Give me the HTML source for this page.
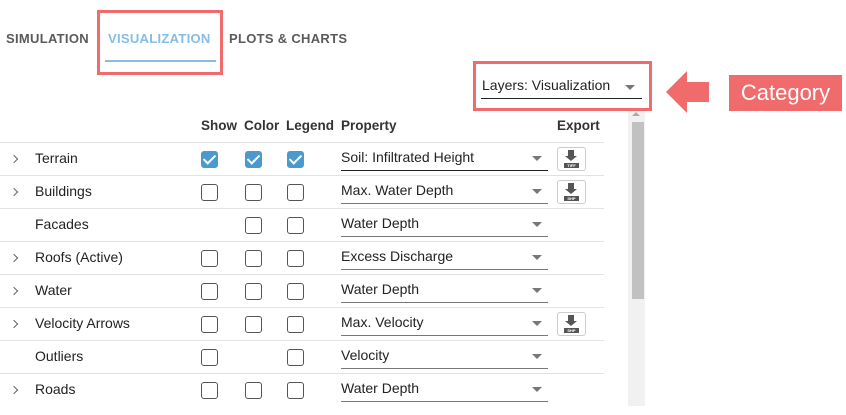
<!DOCTYPE html>
<html><head><style>
body{margin:0;width:846px;height:415px;background:#fff;font-family:"Liberation Sans",sans-serif;position:relative;overflow:hidden;color:#222}
.a{position:absolute}
.tab{position:absolute;top:31px;font-size:13px;font-weight:bold;letter-spacing:0.3px;color:#5a5a5a}
.row{position:absolute;left:0;width:604px;height:33px;border-top:1px solid #e2e2e2}
.cb{position:absolute;width:15px;height:15px;border:1.5px solid #555;border-radius:3px;top:8px}
.cb.on{background:#4a9ad0;border-color:#4a9ad0}
.cb.on:after{content:"";position:absolute;left:4px;top:0px;width:5px;height:10px;border:solid #fff;border-width:0 2.5px 2.5px 0;transform:rotate(45deg)}
.nm{position:absolute;left:35px;top:7px;font-size:14px}
.ch{position:absolute;left:11px;top:13px;width:5px;height:5px;border:solid #666;border-width:1.5px 1.5px 0 0;transform:rotate(45deg)}
.sel{position:absolute;left:341px;width:207px;top:6px;height:21px;border-bottom:1px solid #777;font-size:14px}
.sel:after{content:"";position:absolute;right:6px;top:7px;border:5px solid transparent;border-top:5px solid #777}
.ex{position:absolute;left:557px;top:4px;width:27px;height:22px;border:1px solid #ccc;border-radius:3px;background:#fff}
.ex i{position:absolute;left:10px;top:2px;width:6px;height:6px;background:#555}
.ex b{position:absolute;left:7px;top:8px;border:6px solid transparent;border-top:5px solid #555;border-bottom:0}
.ex s{position:absolute;left:6px;top:15px;width:15px;height:5px;background:#555;font-size:4px;color:#fff;text-decoration:none;line-height:5px;text-align:center;font-weight:bold}
.h{position:absolute;top:118px;font-size:13.5px;font-weight:bold;color:#333}
</style></head><body>
<div class="tab" style="left:6px">SIMULATION</div>
<div class="tab" style="left:108px;color:#85bde6">VISUALIZATION</div>
<div class="tab" style="left:229px">PLOTS &amp; CHARTS</div>
<div class="a" style="left:105px;top:60px;width:111px;height:2px;background:#85bde6"></div>
<div class="a" style="left:97px;top:10px;width:120px;height:59px;border:3px solid #f06b6b"></div>

<div class="a" style="left:482px;top:77px;font-size:14px">Layers: Visualization</div>
<div class="a" style="left:625px;top:85px;border:5px solid transparent;border-top:5px solid #777"></div>
<div class="a" style="left:481px;top:98px;width:161px;height:1px;background:#222"></div>
<div class="a" style="left:473px;top:61px;width:173px;height:44px;border:3px solid #f06b6b"></div>

<svg class="a" style="left:666px;top:71px" width="44" height="42"><polygon points="0,21 21,0 21,11 43,11 43,31 21,31 21,42" fill="#f06b6b"/></svg>
<div class="a" style="left:729px;top:75px;width:113px;height:36px;background:#f06b6b;color:#fff;font-size:22px;line-height:36px;text-align:center">Category</div>

<div class="a" style="left:628px;top:111px;width:17px;height:295px;background:#f1f1f1"></div>
<div class="a" style="left:632px;top:122px;width:12px;height:177px;background:#c1c1c1"></div>
<div class="a" style="left:632px;top:112px;border:4px solid transparent;border-bottom:4px solid #aaa;border-top:0"></div>

<div class="h" style="left:201px">Show</div>
<div class="h" style="left:244px">Color</div>
<div class="h" style="left:286px">Legend</div>
<div class="h" style="left:341px">Property</div>
<div class="h" style="left:557px">Export</div>

<div class="row" style="top:142px"><span class="ch"></span><span class="nm">Terrain</span><div class="cb on" style="left:201px"></div><div class="cb on" style="left:245px"></div><div class="cb on" style="left:287px"></div><div class="sel" style="border-color:#222">Soil: Infiltrated Height</div><div class="ex"><i></i><b></b><s>TIFF</s></div></div>
<div class="row" style="top:175px"><span class="ch"></span><span class="nm">Buildings</span><div class="cb" style="left:201px"></div><div class="cb" style="left:245px"></div><div class="cb" style="left:287px"></div><div class="sel">Max. Water Depth</div><div class="ex"><i></i><b></b><s>SHP</s></div></div>
<div class="row" style="top:208px"><span class="nm">Facades</span><div class="cb" style="left:245px"></div><div class="cb" style="left:287px"></div><div class="sel">Water Depth</div></div>
<div class="row" style="top:241px"><span class="ch"></span><span class="nm">Roofs (Active)</span><div class="cb" style="left:201px"></div><div class="cb" style="left:245px"></div><div class="cb" style="left:287px"></div><div class="sel">Excess Discharge</div></div>
<div class="row" style="top:274px"><span class="ch"></span><span class="nm">Water</span><div class="cb" style="left:201px"></div><div class="cb" style="left:245px"></div><div class="cb" style="left:287px"></div><div class="sel">Water Depth</div></div>
<div class="row" style="top:307px"><span class="ch"></span><span class="nm">Velocity Arrows</span><div class="cb" style="left:201px"></div><div class="cb" style="left:245px"></div><div class="cb" style="left:287px"></div><div class="sel">Max. Velocity</div><div class="ex"><i></i><b></b><s>SHP</s></div></div>
<div class="row" style="top:340px"><span class="nm">Outliers</span><div class="cb" style="left:201px"></div><div class="cb" style="left:287px"></div><div class="sel">Velocity</div></div>
<div class="row" style="top:373px"><span class="ch"></span><span class="nm">Roads</span><div class="cb" style="left:201px"></div><div class="cb" style="left:245px"></div><div class="cb" style="left:287px"></div><div class="sel">Water Depth</div></div>
</body></html>
